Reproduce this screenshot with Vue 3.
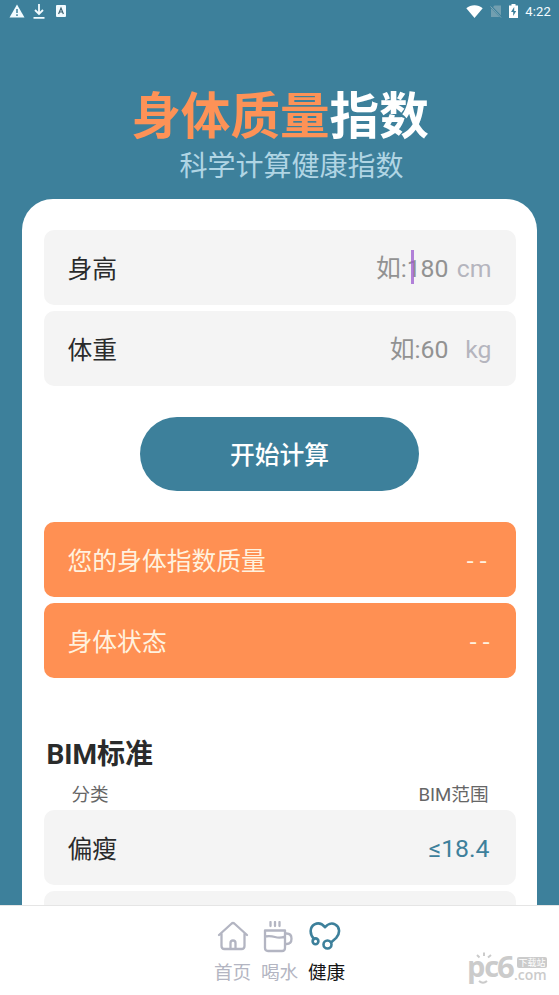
<script setup>
import { ref } from 'vue'

const fields = ref([
  { label: '身高', hint: '如:180', unit: 'cm', active: true },
  { label: '体重', hint: '如:60', unit: 'kg', active: false }
])
const results = [
  { label: '您的身体指数质量', value: '- -', wide: true },
  { label: '身体状态', value: '- -', wide: false }
]
const ranges = [{ name: '偏瘦', range: '≤18.4' }, { name: '', range: '' }]
</script>

<template>
  <div class="screen">
    <header class="status">
      <div class="status-left">
        <svg width="16" height="14" viewBox="0 0 16 14"><path d="M8 0.5 15.5 13.5H0.5Z" fill="#f2fbff" /><path d="M8 5v4M8 10.3v1.6" stroke="#3d809b" stroke-width="1.5" /></svg>
        <svg class="down" width="12" height="15" viewBox="0 0 12 15"><path d="M6 0v9M2 6l4 4 4-4M0.5 13.8h11" stroke="#f2fbff" stroke-width="1.8" fill="none" /></svg>
        <svg class="letter" width="10" height="12" viewBox="0 0 10 12"><rect width="10" height="12" rx="1" fill="#f2fbff" /><path d="M2.6 9 5 3l2.4 6M3.5 7h3" stroke="#3d6272" stroke-width="1.2" fill="none" /></svg>
      </div>
      <div class="status-right">
        <svg width="17" height="13" viewBox="0 0 17 13"><path d="M8.500 13 0.300 3.200C4.700-.8 12.300-.8 16.700 3.200Z" fill="#fff" /></svg>
        <svg width="12" height="13" viewBox="0 0 12 13"><path d="M4.500 0.500H11V12H1V4Z" fill="#729fb0" /><path d="M0.500 1 11.500 12.500" stroke="#3d809b" stroke-width="2.200" /><path d="M0.500 1.500 11 12.500" stroke="#82aab9" stroke-width="1" /></svg>
        <svg width="9" height="14" viewBox="0 0 9 14"><path d="M0 1.500h2.500V0h4v1.500H9V14H0Z" fill="#fff" /><path d="M5.200 3 2 8h2.200v4L7.200 7H5.200Z" fill="#3d809b" /></svg>
        <span class="clock">4:22</span>
      </div>
    </header>

    <div class="banner">
      <h1><span>身体质量</span>指数</h1>
      <p>科学计算健康指数</p>
    </div>

    <main class="card">
      <div class="group">
        <label v-for="f in fields" :key="f.label" class="row">
          <span class="name">{{ f.label }}</span>
          <span class="entry">
            <span class="hint">{{ f.hint }}<i v-if="f.active" class="caret"></i></span>
            <span class="unit">{{ f.unit }}</span>
          </span>
        </label>
      </div>
      <button class="go">开始计算</button>
      <div class="group">
        <div v-for="r in results" :key="r.label" class="row result">
          <span class="name">{{ r.label }}</span>
          <span class="value" :class="{ wide: r.wide }">{{ r.value }}</span>
        </div>
      </div>
      <h2>BIM标准</h2>
      <div class="columns"><span>分类</span><span>BIM范围</span></div>
      <div class="group">
        <div v-for="r in ranges" :key="r.name" class="row">
          <span class="name">{{ r.name }}</span><span class="range">{{ r.range }}</span>
        </div>
      </div>
    </main>

    <nav class="tabs">
      <a class="tab">
        <svg width="32" height="30" viewBox="0 0 32 30"><path d="M2 14 14.700 2.500Q16 1.500 17.300 2.500L30 14M4.500 12.500V25q0 3 3 3h17q3 0 3-3V12.500M13.500 28v-6q0-2.500 2.500-2.500t2.500 2.500v6" /></svg>
        <span>首页</span>
      </a>
      <a class="tab">
        <svg class="cup" width="32" height="32" viewBox="0 0 32 32"><path d="M3 9.500h20V27q0 3-3 3H6q-3 0-3-3ZM3 15.500q5-1 10 .5t10-.5M23 12.500h1.500q5 0 5 5.200t-5 5.300H23M8.500 1v4M13 1v4M17.500 1v4" /></svg>
        <span>喝水</span>
      </a>
      <a class="tab active">
        <svg width="32" height="30" viewBox="0 0 32 30"><path d="M5 18C.2 13 .8 6 5.500 3.400c4-2 8-.2 10.500 2.800C18.500 3.200 22.500 1.400 26 3.400c5 2.500 5.300 9 1.200 13.500L22 21.500" /><circle cx="6.500" cy="20.300" r="2.900" /><circle cx="18.500" cy="23.500" r="4" /></svg>
        <span>健康</span>
      </a>
      <div class="mark">
        <svg class="face" width="30" height="10" viewBox="0 0 30 10"><path d="M12.500 7.500 10 5M17 6V2.500M21 7.500l3-2.500" /></svg>
        <b>pc</b><b class="six">6</b>
        <svg class="smile" width="26" height="32" viewBox="0 0 26 32"><path d="M12 27q4 3.500 8 0" /></svg>
        <div class="mark-side"><span class="tag">下载站</span><span class="com">.com</span></div>
      </div>
    </nav>
  </div>
</template>

<style>
body {
  margin: 0;
  overflow: hidden;
}
</style>

<style scoped>
* {
  box-sizing: border-box;
}
.screen {
  width: 559px;
  height: 995px;
  display: flex;
  flex-direction: column;
  background: #3d809b;
  overflow: hidden;
  font-family: Roboto, "Noto Sans CJK SC", sans-serif;
  color: #2a2b2b;
}
.status {
  height: 24px;
  flex: none;
  display: flex;
  justify-content: space-between;
  padding: 0 8px 0 9px;
}
.status-left,
.status-right {
  display: flex;
  align-items: center;
  height: 22px;
}
.down {
  margin-left: 8px;
}
.letter {
  margin-left: 11px;
}
.status-right {
  gap: 7px;
}
.clock {
  font-size: 13px;
  line-height: 22px;
  padding-top: 1px;
  color: #f5fcff;
  letter-spacing: 0.2px;
}
.banner {
  height: 175px;
  flex: none;
  padding-top: 63px;
  text-align: center;
  color: #fff;
}
h1 {
  margin: 0;
  font-size: 49.6px;
  line-height: 60px;
  font-weight: 700;
  padding-left: 1px;
}
h1 span {
  color: #fd9257;
}
.banner p {
  margin: 2px 0 0;
  font-size: 28px;
  line-height: 36px;
  padding-left: 24px;
  color: #b0d5e4;
  font-weight: 400;
}
.card {
  flex: 1;
  min-height: 0;
  overflow: hidden;
  margin: 0 22px;
  padding: 31px 21.5px 0;
  background: #fff;
  border-radius: 31px 31px 0 0;
}
.group {
  display: flex;
  flex-direction: column;
  gap: 6px;
}
.row {
  height: 75px;
  flex: none;
  display: flex;
  align-items: center;
  justify-content: space-between;
  padding: 3px 24px 0;
  border-radius: 10px;
  background: #f4f4f4;
  font-size: 24.8px;
  line-height: 36px;
}
.name {
  padding-top: 2px;
}
.entry {
  display: flex;
}
.hint {
  position: relative;
  color: #929292;
}
.caret {
  position: absolute;
  right: 35px;
  top: -1px;
  width: 3px;
  height: 34px;
  background: #9b59cf;
  opacity: 0.75;
}
.unit {
  width: 43px;
  text-align: right;
  color: #b5b5be;
}
.go {
  display: block;
  width: 279px;
  height: 74px;
  margin: 31px auto;
  padding: 4px 0 0;
  border: 0;
  border-radius: 37px;
  background: #3d809b;
  color: #fff;
  font: 500 24.8px/36px Roboto, "Noto Sans CJK SC", sans-serif;
}
.result {
  background: #ff9053;
  color: #fff2df;
}
.value {
  margin-right: 2px;
}
.value.wide {
  margin-right: 5px;
}
h2 {
  margin: 57px 0 0 3px;
  font-size: 28px;
  line-height: 40px;
  font-weight: 700;
}
.columns {
  display: flex;
  justify-content: space-between;
  height: 35px;
  padding: 7px 27px 0 28px;
  font-size: 18.6px;
  line-height: 26px;
  color: #666;
}
.range {
  color: #3d809b;
  padding-right: 2px;
}
.tabs {
  position: relative;
  height: 90px;
  flex: none;
  display: flex;
  justify-content: center;
  gap: 9px;
  padding: 15px 0 0;
  border-top: 1px solid #e5e5e5;
  background: #fff;
}
.tab {
  display: flex;
  flex-direction: column;
  align-items: center;
  justify-content: space-between;
  width: 38px;
  height: 65px;
  color: #b3b5c2;
  font-size: 18.6px;
  line-height: 26px;
}
.tab svg {
  fill: none;
  stroke: currentColor;
  stroke-width: 2.3;
  stroke-linejoin: round;
  stroke-linecap: round;
}
.tab .cup {
  margin-right: 3px;
}
.tab span {
  white-space: nowrap;
}
.active span {
  color: #151515;
}
.tab.active svg {
  margin-right: 3px;
  color: #3d809b;
  stroke-width: 2.6;
}
.mark {
  position: absolute;
  left: 467px;
  top: 42px;
  display: flex;
  height: 40px;
  color: #cbcbcb;
  font-family: "Open Sans", sans-serif;
}
.mark b {
  width: 30px;
  font-size: 29px;
  line-height: 36px;
  letter-spacing: -1px;
}
.mark .six {
  width: 17px;
  font-size: 31px;
}
.face,
.smile {
  position: absolute;
  left: 0;
  top: 2px;
  fill: none;
  stroke: #cbcbcb;
  stroke-width: 2;
}
.smile {
  top: 6px;
}
.mark-side {
  display: flex;
  flex-direction: column;
  padding-top: 9px;
}
.tag {
  width: 30px;
  height: 11px;
  margin-left: 3px;
  background: #cbcbcb;
  color: #fff;
  border-radius: 2px;
  font: 9px/11px "Noto Sans CJK SC", sans-serif;
  text-align: center;
}
.com {
  margin-top: 1px;
  font-size: 14px;
  line-height: 11px;
  font-weight: 600;
}
</style>
